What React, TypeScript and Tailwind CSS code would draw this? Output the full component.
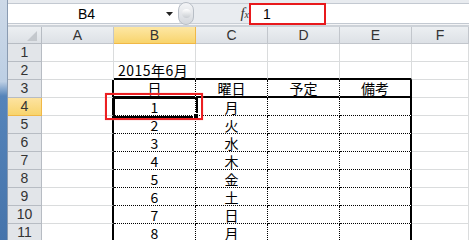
import React from "react";

const ROW_H = "h-[18px]";
const days = ["月", "火", "水", "木", "金", "土", "日", "月"];
const letters = ["A", "B", "C", "D", "E", "F"];

const grid = "border-r border-b border-[#dadcdd]";
const leftThick = "border-r-2 border-r-black border-b border-b-[#dadcdd]";
const topThick = "border-r border-r-[#dadcdd] border-b-2 border-b-black";
const headInner = "border-r border-r-black [border-right-style:dotted] border-b-2 border-b-black";
const headLast = "border-r-2 border-r-black border-b-2 border-b-black";
const bodyInner = "border-r border-b border-black border-dotted";
const bodyLast = "border-r-2 border-r-black border-b border-b-black [border-bottom-style:dotted]";

function cellBorder(row: number, col: number) {
  // col: 0=A ... 5=F
  if (col === 0) return row >= 3 ? leftThick : grid;
  if (col >= 1 && col <= 4) {
    if (row === 2) return topThick;
    if (row === 3) return col === 4 ? headLast : headInner;
    if (row >= 4) return col === 4 ? bodyLast : bodyInner;
  }
  return grid;
}

function cellText(row: number, col: number) {
  if (row === 2 && col === 1) return "2015年6月";
  if (row === 3) return ["", "日", "曜日", "予定", "備考", ""][col];
  if (row >= 4 && col === 1) return String(row - 3);
  if (row >= 4 && col === 2) return days[row - 4];
  return "";
}

function FormulaBar() {
  return (
    <div className="h-[27px] bg-[#e3e7ec] flex flex-col">
      <div className="h-[3px] bg-[#e8ebef]" />
      <div className="flex h-[21px]">
        <div className="w-[171px] bg-white border-t border-b border-[#c3c9d1] flex items-center">
          <span className="w-[157px] text-center text-[14px] text-black font-['Liberation_Sans',sans-serif] leading-none">B4</span>
          <svg width="7" height="4" viewBox="0 0 7 4" className="ml-[1px]">
            <polygon points="0,0 7,0 3.5,4" fill="#222" />
          </svg>
        </div>
        <div className="relative w-[71px] bg-[#e9ecf0] border-t border-b border-[#c9ced5] flex items-center justify-end">
          <div className="absolute -left-[1px] top-[-2px] w-[16px] h-[23px] rounded-full bg-gradient-to-b from-[#f4f5f7] to-[#d4d8dd] border border-[#b8bec6] flex items-center justify-center">
            <div className="w-[9px] h-[9px] rounded-full bg-gradient-to-b from-[#ffffff] to-[#c9cdd2]" />
          </div>
          <span className="pr-[1px] text-[15px] italic text-[#333] font-['Liberation_Serif',serif] leading-none">
            f<span className="text-[10px] italic font-['Liberation_Serif',serif]">x</span>
          </span>
        </div>
        <div className="relative flex-1 bg-white border-t border-b border-[#c3c9d1] flex items-center">
          <span className="pl-[13px] text-[14px] text-black font-['Liberation_Sans',sans-serif] leading-none">1</span>
          <div className="absolute left-[-1px] top-[-1px] w-[77px] h-[22px] border-2 border-[#e8191c]" />
        </div>
      </div>
      <div className="h-[1px] bg-[#f3f4f6]" />
      <div className="h-[2px] bg-[#cdd2d8]" />
    </div>
  );
}

export default function App() {
  return (
    <div className="w-[469px] h-[240px] overflow-hidden bg-white flex">
      <div className="w-[8px] h-full border-r border-[#8a9bb1] bg-[linear-gradient(to_bottom,#cdd9e7_0%,#bdcfe4_34%,#5584ba_40%,#4674ab_100%)]" />
      <div className="flex-1 flex flex-col">
        <FormulaBar />
        <div className="grid grid-cols-[34px_72px_82px_72px_72px_72px_1fr]">
          {/* column headers */}
          <div className="h-[17px] border-r border-b border-[#b7bcc3] bg-gradient-to-b from-[#eceff2] to-[#dde1e6] flex items-end justify-end pr-[4px] pb-[2px]">
            <svg width="10" height="10" viewBox="0 0 10 10">
              <polygon points="10,0 10,10 0,10" fill="#c4c8cd" />
            </svg>
          </div>
          {letters.map((l) => (
            <div
              key={l}
              className={
                l === "B"
                  ? "h-[17px] border-r border-b border-[#f0b847] bg-gradient-to-b from-[#fde7a4] to-[#f8d46c] flex items-end justify-center pb-[1px] text-[14px] leading-none text-[#333] font-['Liberation_Sans',sans-serif]"
                  : "h-[17px] border-r border-b border-[#c2c6cc] bg-gradient-to-b from-[#eceff2] to-[#dde1e6] flex items-end justify-center pb-[1px] text-[14px] leading-none text-[#333] font-['Liberation_Sans',sans-serif]"
              }
            >
              {l}
            </div>
          ))}
          {Array.from({ length: 11 }, (_, i) => i + 1).map((row) => (
            <React.Fragment key={row}>
              <div
                className={
                  row === 4
                    ? `${ROW_H} border-r border-b border-[#f0b847] bg-gradient-to-b from-[#fde3a0] to-[#f8d46c] flex items-end justify-center pb-[2px] text-[14px] leading-none text-[#333] font-['Liberation_Sans',sans-serif]`
                    : `${ROW_H} border-r border-b border-[#b7bcc3] bg-[#e2e5e9] flex items-end justify-center pb-[2px] text-[14px] leading-none text-[#333] font-['Liberation_Sans',sans-serif]`
                }
              >
                {row}
              </div>
              {letters.map((_, col) => (
                <div
                  key={col}
                  className={`${ROW_H} relative ${cellBorder(row, col)} flex items-end text-[14px] leading-[15px] text-black font-['Noto_Sans_CJK_JP',sans-serif] ${
                    row === 2 && col === 1 ? "justify-start pl-[4px] whitespace-nowrap tracking-[0.5px]" : "justify-center"
                  }`}
                >
                  {cellText(row, col)}
                  {row === 4 && col === 1 && (
                    <>
                      <div className="absolute left-[-1px] top-[-1px] right-[-3px] bottom-[-3px] border-2 border-black z-10" />
                      <div className="absolute right-[-4px] bottom-[-4px] w-[6px] h-[6px] bg-black border border-white z-10" />
                      <div className="absolute left-[-9px] top-[-5px] right-[-8px] bottom-[-5px] border-2 border-[#ec1f22] shadow-[0_0_1px_#f59a9a] z-20" />
                    </>
                  )}
                </div>
              ))}
            </React.Fragment>
          ))}
        </div>
      </div>
    </div>
  );
}
